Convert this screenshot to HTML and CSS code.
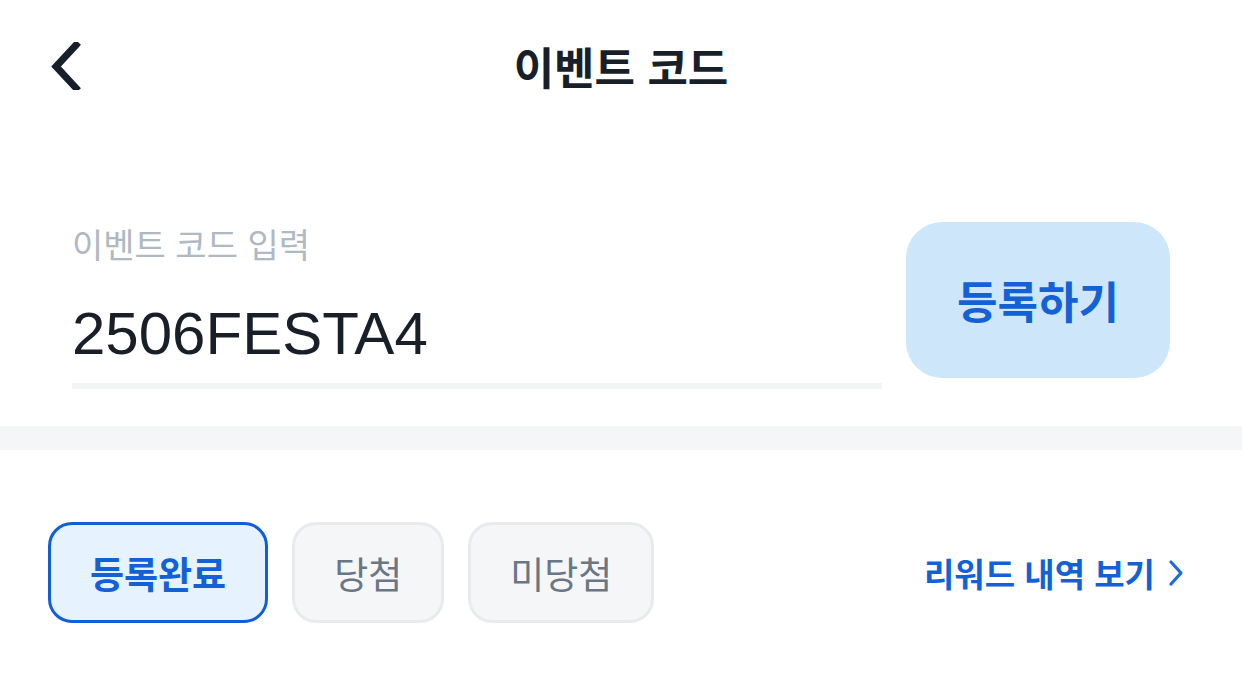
FILE: index.html
```html
<!DOCTYPE html>
<html lang="ko">
<head>
<meta charset="utf-8">
<title>이벤트 코드</title>
<link rel="stylesheet" href="styles.css">
</head>
<body>
<div class="screen">
  <header class="topbar">
    <button class="back" aria-label="뒤로">
      <svg width="36" height="48" viewBox="0 0 36 48"><path d="M28 3 L8 24.5 L28 46" fill="none" stroke="#191f28" stroke-width="7" stroke-linecap="square" stroke-linejoin="miter"/></svg>
    </button>
    <h1 class="title">이벤트 코드</h1>
  </header>

  <section class="entry">
    <div class="field">
      <label class="field-label">이벤트 코드 입력</label>
      <div class="field-value">2506FESTA4</div>
      <div class="field-line"></div>
    </div>
    <button class="submit">등록하기</button>
  </section>

  <div class="divider"></div>

  <section class="filters">
    <div class="chips">
      <button class="chip chip-active">등록완료</button>
      <button class="chip">당첨</button>
      <button class="chip">미당첨</button>
    </div>
    <a class="history" href="#">리워드 내역 보기
      <svg width="18" height="28" viewBox="0 0 18 28"><path d="M4 3 L14 14 L4 25" fill="none" stroke="#1a6ae0" stroke-width="3.2" stroke-linecap="round" stroke-linejoin="round"/></svg>
    </a>
  </section>
</div>
</body>
</html>
```

FILE: styles.css
```css
* { box-sizing: border-box; }
html, body { margin: 0; padding: 0; background: #ffffff; }
body {
  font-family: "Noto Sans CJK KR", "Noto Sans", "Liberation Sans", sans-serif;
  color: #191f28;
}
.screen { width: 1242px; height: 692px; overflow: hidden; }

.topbar {
  position: relative;
  height: 132px;
  display: flex;
  align-items: center;
  justify-content: center;
}
.back {
  position: absolute;
  left: 48px;
  top: 42px;
  border: 0;
  background: none;
  padding: 0;
  width: 36px;
  height: 48px;
  display: flex;
}
.title {
  margin: 0;
  font-size: 44px;
  font-weight: 700;
  line-height: 56px;
  color: #191f28;
}

.entry {
  display: flex;
  align-items: flex-start;
  gap: 24px;
  padding: 90px 72px 0 72px;
}
.field { flex: 1; display: flex; flex-direction: column; }
.field-label {
  font-size: 34px;
  line-height: 44px;
  color: #b0b8c1;
}
.field-value {
  margin-top: 28px;
  font-family: "Liberation Sans", "Noto Sans", sans-serif;
  font-size: 60px;
  line-height: 80px;
  color: #191f28;
}
.field-line {
  margin-top: 9px;
  height: 6px;
  background: #f2f4f6;
}
.submit {
  width: 264px;
  height: 156px;
  border: 0;
  border-radius: 36px;
  background: #cde6fa;
  color: #1261d6;
  font-family: "Noto Sans CJK KR", sans-serif;
  font-size: 44px;
  font-weight: 700;
}

.divider {
  margin-top: 37px;
  height: 24px;
  background: #f4f6f8;
}

.filters {
  display: flex;
  align-items: center;
  justify-content: space-between;
  padding: 72px 57px 0 48px;
}
.chips { display: flex; gap: 24px; }
.chip {
  height: 101px;
  padding: 0 39px;
  border: 3px solid #e8ebee;
  border-radius: 24px;
  background: #f4f6f8;
  color: #6b7684;
  font-family: "Noto Sans CJK KR", sans-serif;
  font-size: 37px;
  font-weight: 400;
}
.chip-active {
  border-color: #0f5fd8;
  background: #e6f2fe;
  color: #1261d6;
  font-weight: 700;
}
.history {
  display: flex;
  align-items: center;
  gap: 12px;
  text-decoration: none;
  color: #1261d6;
  font-size: 33px;
  font-weight: 700;
}
```
